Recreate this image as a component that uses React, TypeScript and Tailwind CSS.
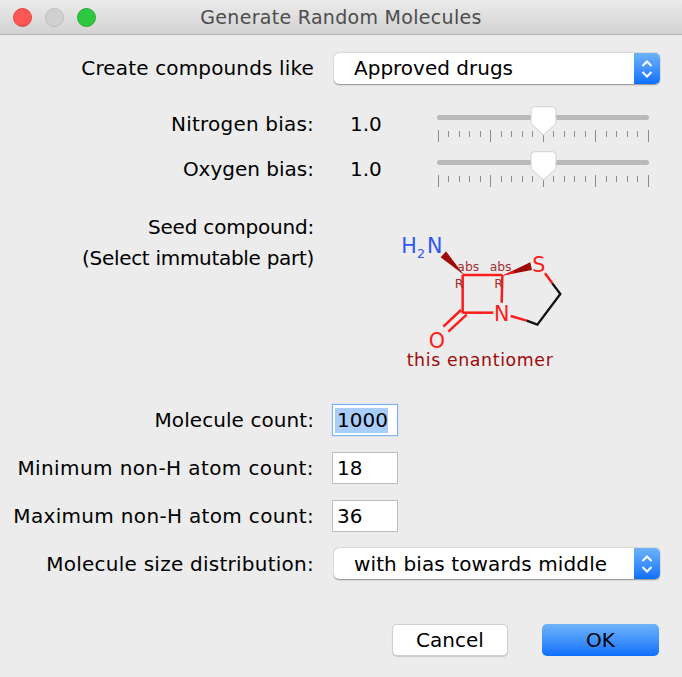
import React from 'react'

const font = "font-['DejaVu_Sans',sans-serif]"
const ticks = Array.from({ length: 21 }, (_, i) => i)

const Stepper = () => (
    <div className="w-[26px] h-full rounded-r-[5px] bg-gradient-to-b from-[#6db3f9] to-[#0a6ffb] flex items-center justify-center">
        <svg width="14" height="22" viewBox="0 0 14 22" fill="none" stroke="white" strokeWidth="2">
            <path d="M2.5 8 L7 3.5 L11.5 8" />
            <path d="M2.5 14 L7 18.5 L11.5 14" />
        </svg>
    </div>
)

const Select = ({ text, textClass }: { text: string; textClass: string }) => (
    <div className="ml-5 w-[326px] h-[31px] bg-white rounded-[5px] shadow-[0_0.5px_1.5px_rgba(0,0,0,0.4)] flex items-center justify-between">
        <span className={`pl-5 text-[20px] leading-none ${textClass}`}>{text}</span>
        <Stepper />
    </div>
)

const Label = ({ children, className = "" }: { children: React.ReactNode; className?: string }) => (
    <div className={`w-[314px] shrink-0 text-right text-[20px] leading-[31px] whitespace-nowrap ${className}`}>{children}</div>
)

const SliderRow = ({ label, className, labelClass }: { label: string; className: string; labelClass: string }) => (
    <div className={`flex items-center h-9 ${className}`}>
        <Label className={labelClass}>{label}</Label>
        <div className="ml-9 w-[87px] text-[20px] leading-none">1.0</div>
        <div className="relative w-[212px] h-9">
            <div className="mt-[9px] h-[5px] rounded-full bg-[#b9b9b9]" />
            <div className="mt-[10px] flex justify-between items-start px-[0.5px]">
                {ticks.map((i) => (
                    <div key={i} className={i % 5 === 0 ? "w-px h-3 bg-[#8c8c8c]" : "w-px h-[6px] mt-px bg-[#8c8c8c]"} />
                ))}
            </div>
            <svg className="absolute left-[93px] top-0" width="27" height="30" viewBox="0 0 27 30">
                <path
                    d="M4.5 0.7 H22.5 Q26 0.7 26 4.5 V16 Q26 17.5 24.8 18.7 L13.5 29 L2.2 18.7 Q1 17.5 1 16 V4.5 Q1 0.7 4.5 0.7 Z"
                    fill="white"
                    stroke="#cfcfcf"
                />
            </svg>
        </div>
    </div>
)

const NumberField = ({ label, value, labelClass, className }: { label: string; value: string; labelClass: string; className: string }) => (
    <div className={`flex items-center ${className}`}>
        <Label className={labelClass}>{label}</Label>
        {value === "1000" ? (
            <div className="ml-[18px] w-[66px] h-8 bg-white border border-[#7fb4f2] shadow-[0_0_1px_#7fb4f2] flex items-center pl-[2px]">
                <span className="bg-[#a9cdf9] text-[20px] leading-[25px] px-[2px] w-[53px]">1000</span>
            </div>
        ) : (
            <div className="ml-[18px] w-[66px] h-8 bg-white border border-[#bdbdbd] flex items-center pl-1">
                <span className="text-[20px] leading-none">{value}</span>
            </div>
        )}
    </div>
)

const Molecule = () => (
    <svg className="ml-[66px] mt-2" width="200" height="160" viewBox="0 0 600 480" fill="none">
        <g stroke="#fc1c1c" strokeWidth="7.5">
            <path d="M248 165 H367" />
            <path d="M248 165 V280" />
            <path d="M367 165 L365 248" />
            <path d="M248 278 H340" />
            <path d="M392 288 L440 302" />
            <path d="M495 160 L517 190" />
            <path d="M243 270 L190 320" />
            <path d="M260 284 L205 335" />
        </g>
        <path d="M440 302 L472 314 L541 222 L517 190" stroke="#111" strokeWidth="7" />
        <polygon points="182,112 198,94 252,165" fill="#a00808" />
        <polygon points="367,167 451,127 456,150" fill="#a00808" />
        <polygon points="367,167 400,151 404,160" fill="#fc1c1c" />
        <g style={{ fontFamily: "'DejaVu Sans', sans-serif" }}>
            <text x="64" y="98" fontSize="62" fill="#2f56f5">H</text>
            <text x="111" y="115" fontSize="38" fill="#2f56f5">2</text>
            <text x="141" y="98" fontSize="62" fill="#2f56f5">N</text>
            <text x="457" y="155" fontSize="62" fill="#fc1c1c">S</text>
            <text x="342" y="304" fontSize="62" fill="#fc1c1c">N</text>
            <text x="146" y="384" fontSize="62" fill="#fc1c1c">O</text>
            <text x="232" y="154" fontSize="37" fill="#a43030">abs</text>
            <text x="329" y="154" fontSize="37" fill="#a43030">abs</text>
            <text x="224" y="205" fontSize="38" fill="#a43030">R</text>
            <text x="343" y="205" fontSize="38" fill="#a43030">R</text>
            <text x="80" y="438" fontSize="52" letterSpacing="1.9" fill="#a00808">this enantiomer</text>
        </g>
    </svg>
)

const App = () => {
    return (
        <div className={`w-[682px] h-[677px] bg-[#ececec] text-black overflow-hidden ${font}`}>
            <div className="relative h-[35px] bg-gradient-to-b from-[#ebebeb] to-[#d2d2d2] border-b border-[#b4b4b4] rounded-t-[5px] flex items-center justify-center">
                <div className="absolute left-[13px] top-[8px] flex gap-[13px]">
                    <div className="w-[19px] h-[19px] rounded-full bg-[#fc5753] border border-[#e0443e]" />
                    <div className="w-[19px] h-[19px] rounded-full bg-[#d0d0d0] border border-[#bfbfbf]" />
                    <div className="w-[19px] h-[19px] rounded-full bg-[#2dc840] border border-[#24ab33]" />
                </div>
                <span className="text-[19px] tracking-[0.3px] text-[#4d4d4d] leading-none">Generate Random Molecules</span>
            </div>
            <div className="mt-[18px] flex items-center">
                <Label className="tracking-[0.15px]">Create compounds like</Label>
                <Select text="Approved drugs" textClass="-translate-y-px" />
            </div>
            <SliderRow label="Nitrogen bias:" labelClass="tracking-[0.2px]" className="mt-[22px]" />
            <SliderRow label="Oxygen bias:" labelClass="tracking-[0px]" className="mt-[9px]" />
            <div className="mt-[25px] flex items-start">
                <Label>
                    <span className="tracking-[-0.2px]">Seed compound:</span>
                    <br />
                    <span className="tracking-[-0.3px]">(Select immutable part)</span>
                </Label>
                <Molecule />
            </div>
            <NumberField label="Molecule count:" value="1000" labelClass="tracking-[0.07px]" className="mt-6" />
            <NumberField label="Minimum non-H atom count:" value="18" labelClass="tracking-[0.4px]" className="mt-4" />
            <NumberField label="Maximum non-H atom count:" value="36" labelClass="tracking-[0.33px]" className="mt-4" />
            <div className="mt-4 flex items-center">
                <Label className="tracking-[0.25px] translate-y-px">Molecule size distribution:</Label>
                <Select text="with bias towards middle" textClass="tracking-[0.12px]" />
            </div>
            <div className="mt-[45px] flex">
                <button className="ml-[392px] w-[116px] h-8 bg-white rounded-[5px] border border-[#cfcfcf] shadow-[0_1px_1px_rgba(0,0,0,0.15)] text-[20px] leading-none">
                    Cancel
                </button>
                <button className="ml-[34px] w-[117px] h-8 rounded-[5px] bg-gradient-to-b from-[#6db3f9] to-[#0a6ffb] text-[20px] leading-none">
                    OK
                </button>
            </div>
        </div>
    )
}

export default App
